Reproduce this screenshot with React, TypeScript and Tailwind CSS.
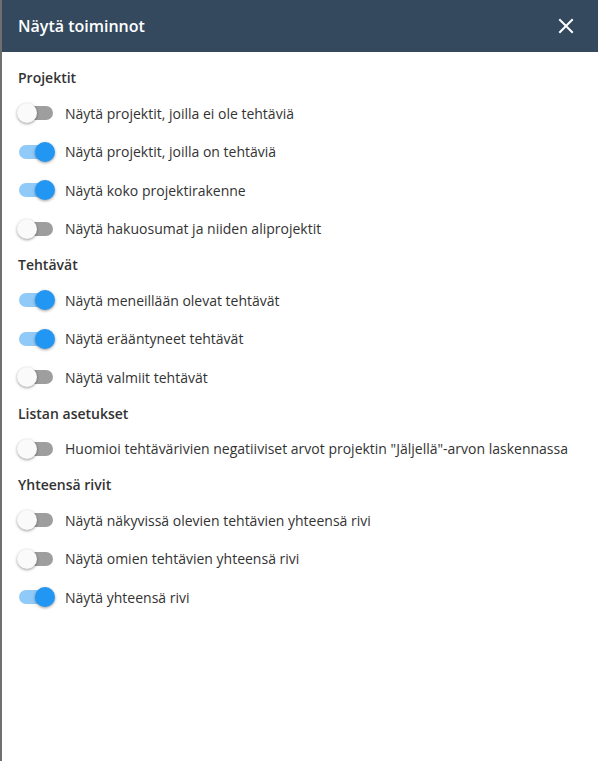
import { useState } from "react";

type Item = { label: string; on: boolean };
type Section = { title: string; items: Item[] };

const sections: Section[] = [
    {
        title: "Projektit",
        items: [
            { label: "Näytä projektit, joilla ei ole tehtäviä", on: false },
            { label: "Näytä projektit, joilla on tehtäviä", on: true },
            { label: "Näytä koko projektirakenne", on: true },
            { label: "Näytä hakuosumat ja niiden aliprojektit", on: false },
        ],
    },
    {
        title: "Tehtävät",
        items: [
            { label: "Näytä meneillään olevat tehtävät", on: true },
            { label: "Näytä erääntyneet tehtävät", on: true },
            { label: "Näytä valmiit tehtävät", on: false },
        ],
    },
    {
        title: "Listan asetukset",
        items: [
            {
                label: "Huomioi tehtävärivien negatiiviset arvot projektin \"Jäljellä\"-arvon laskennassa",
                on: false,
            },
        ],
    },
    {
        title: "Yhteensä rivit",
        items: [
            { label: "Näytä näkyvissä olevien tehtävien yhteensä rivi", on: false },
            { label: "Näytä omien tehtävien yhteensä rivi", on: false },
            { label: "Näytä yhteensä rivi", on: true },
        ],
    },
];

function Toggle({ on, onClick }: { on: boolean; onClick: () => void }) {
    return (
        <button onClick={onClick} className="relative h-[20px] w-[38px] shrink-0" aria-pressed={on}>
            <span
                className={`absolute left-[2px] top-[3px] h-[14px] w-[34px] rounded-full ${on ? "bg-[#90caf9]" : "bg-[#9e9e9e]"}`}
            ></span>
            <span
                className={`absolute top-0 h-[20px] w-[20px] rounded-full shadow-[0_1px_3px_rgba(0,0,0,0.4)] ${on ? "left-[18px] bg-[#2196f3]" : "left-0 bg-[#fafafa]"}`}
            ></span>
        </button>
    );
}

export default function App() {
    const [state, setState] = useState(sections.map((s) => s.items.map((i) => i.on)));

    const flip = (si: number, ii: number) => {
        setState(state.map((row, a) => row.map((v, b) => (a === si && b === ii ? !v : v))));
    };

    return (
        <div
            className="flex h-[761px] w-[598px] border-l-2 border-[#6f6f6f] bg-white text-[#333]"
            style={{ fontFamily: '"Open Sans", "Liberation Sans", sans-serif' }}
        >
            <div className="flex w-full flex-col">
                <header className="flex h-[52px] shrink-0 items-center justify-between bg-[#34495e] pl-[16px] pr-[24px] text-white">
                    <h1 className="text-[16px] font-semibold">Näytä toiminnot</h1>
                    <button aria-label="Sulje">
                        <svg width="16" height="16" viewBox="0 0 16 16" stroke="white" strokeWidth="2" strokeLinecap="square">
                            <path d="M2 2 L14 14 M14 2 L2 14" />
                        </svg>
                    </button>
                </header>

                <div className="flex flex-col pl-[15px] pt-[9px]">
                    {sections.map((s, si) => (
                        <div key={s.title}>
                            <h2 className="flex h-[33px] items-center pl-[1px] text-[14px] font-semibold">{s.title}</h2>
                            {s.items.map((item, ii) => (
                                <div key={item.label} className="flex h-[38.5px] items-center gap-[10px]">
                                    <Toggle on={state[si][ii]} onClick={() => flip(si, ii)} />
                                    <span className="text-[14px]">{item.label}</span>
                                </div>
                            ))}
                        </div>
                    ))}
                </div>
            </div>
        </div>
    );
}
